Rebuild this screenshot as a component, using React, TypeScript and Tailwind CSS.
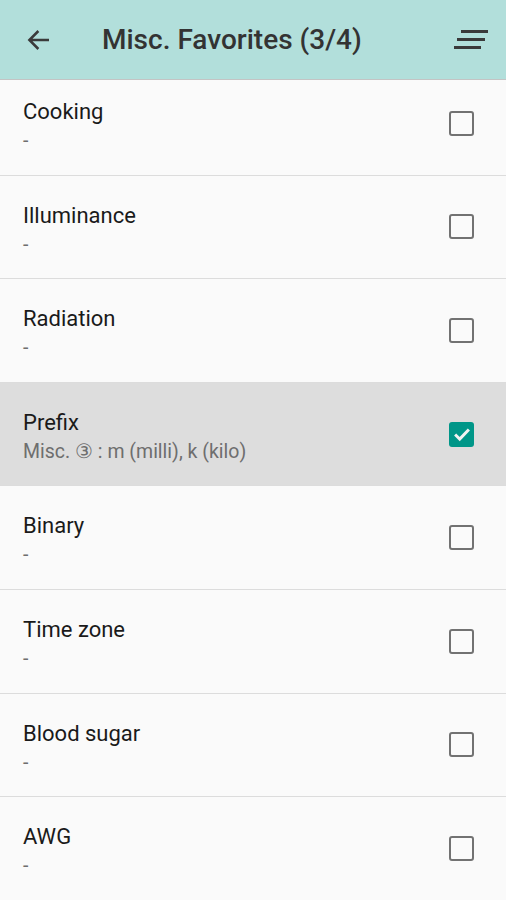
import { useState } from "react";

interface Item {
  title: string;
  subtitle: string;
  checked: boolean;
}

const initialItems: Item[] = [
  { title: "Cooking", subtitle: "-", checked: false },
  { title: "Illuminance", subtitle: "-", checked: false },
  { title: "Radiation", subtitle: "-", checked: false },
  { title: "Prefix", subtitle: "Misc. ③ : m (milli), k (kilo)", checked: true },
  { title: "Binary", subtitle: "-", checked: false },
  { title: "Time zone", subtitle: "-", checked: false },
  { title: "Blood sugar", subtitle: "-", checked: false },
  { title: "AWG", subtitle: "-", checked: false },
];

function Checkbox({ checked }: { checked: boolean }) {
  if (checked) {
    return (
      <div className="w-[25px] h-[25px] rounded-[3px] bg-[#009688] flex items-center justify-center">
        <svg viewBox="0 0 24 24" className="w-[22px] h-[22px]" fill="none" stroke="#f2f2f2" strokeWidth="3.2">
          <path d="M4.5 12.5l5 5L19.5 7" />
        </svg>
      </div>
    );
  }
  return <div className="w-[25px] h-[25px] rounded-[3px] border-[2.5px] border-[#727272]" />;
}

export default function App() {
  const [items, setItems] = useState<Item[]>(initialItems);

  const toggle = (i: number) => {
    setItems(items.map((it, idx) => (idx === i ? { ...it, checked: !it.checked } : it)));
  };

  return (
    <div className="h-[900px] w-full flex flex-col bg-[#fafafa] overflow-hidden" style={{ fontFamily: "Roboto, 'Noto Sans', sans-serif" }}>
      <div className="h-[80px] shrink-0 bg-[#b2dfdb] border-b border-[#c4c4c4] flex items-center pl-[24px] pr-[18px] relative z-10">
        <svg viewBox="0 0 24 24" className="w-[30px] h-[30px]" fill="none" stroke="#3a3a3a" strokeWidth="2">
          <path d="M20 12H4.5M11.5 4.8L4.3 12l7.2 7.2" />
        </svg>
        <div className="ml-[48px] text-[28px] font-medium text-[#333333] leading-none">
          Misc. Favorites (3/4)
        </div>
        <div className="ml-auto w-[36px] h-[24px] flex flex-col items-end justify-center gap-[5px]">
          <div className="w-[27px] h-[3px] bg-[#3a3a3a]" />
          <div className="w-[28px] h-[3px] bg-[#3a3a3a] mr-[3px]" />
          <div className="w-[27px] h-[3px] bg-[#3a3a3a] mr-[7px]" />
        </div>
      </div>
      <div className="flex-1 overflow-hidden">
        <div className="-mt-[8px]">
          {items.map((it, i) => (
            <div
              key={it.title}
              onClick={() => toggle(i)}
              className={`h-[103.6px] border-b border-[#dcdcdc] flex pl-[23px] pr-[32px] cursor-pointer ${
                it.checked ? "bg-[#dddddd]" : "bg-[#fafafa]"
              }`}
            >
              <div className="flex-1 flex flex-col pt-[26px]">
                <div className="text-[22px] text-[#1a1a1a] leading-[28px]">{it.title}</div>
                <div className="text-[19.5px] text-[#6e6e6e] leading-[28px] mt-[1px]">{it.subtitle}</div>
              </div>
              <div className="self-center">
                <Checkbox checked={it.checked} />
              </div>
            </div>
          ))}
        </div>
      </div>
    </div>
  );
}
